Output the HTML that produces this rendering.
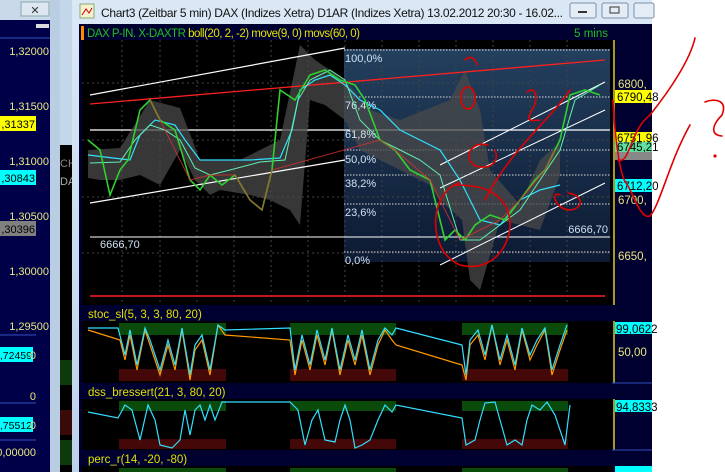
<!DOCTYPE html>
<html><head><meta charset="utf-8"><style>
html,body{margin:0;padding:0;width:725px;height:472px;overflow:hidden;background:#fff}
svg{display:block}
text{font-family:"Liberation Sans",sans-serif}
</style></head><body>
<svg width="725" height="472" viewBox="0 0 725 472" xmlns="http://www.w3.org/2000/svg">
<defs>
<linearGradient id="tb" x1="0" y1="0" x2="0" y2="1"><stop offset="0" stop-color="#dbe8f6"/><stop offset="1" stop-color="#bcd2ea"/></linearGradient>
<linearGradient id="fib" x1="0" y1="0" x2="0" y2="1"><stop offset="0" stop-color="#23405e"/><stop offset="1" stop-color="#0d1a33"/></linearGradient>
</defs>
<rect width="725" height="472" fill="#fff"/>
<rect x="0" y="0" width="60" height="472" fill="#b9cde3"/>
<rect x="0" y="0" width="50" height="472" fill="#000048"/>
<rect x="0" y="0" width="50" height="20" fill="#c9d9ea"/>
<rect x="21" y="2" width="28" height="14" fill="#dde7f2" stroke="#8aa" />
<text x="35" y="14" font-size="11" text-anchor="middle" fill="#333">✕</text>
<rect x="36" y="24" width="13" height="4" fill="#ddd"/>
<line x1="0" y1="38" x2="50" y2="38" stroke="#3050c0"/>
<g font-size="11" fill="#e8e880" text-anchor="end">
<text x="49" y="55">1,32000</text>
<text x="49" y="110">1,31500</text>
<text x="49" y="165">1,31000</text>
<text x="49" y="220">1,30500</text>
<text x="49" y="275">1,30000</text>
<text x="49" y="330">1,29500</text>
<text x="36" y="400">0</text>
<text x="36" y="456">50,00000</text>
</g>
<rect x="0" y="116" width="36" height="15" fill="#ffff00"/><text x="35" y="128" font-size="11" fill="#000" text-anchor="end">,31337</text>
<rect x="0" y="170" width="36" height="15" fill="#00ffff"/><text x="35" y="182" font-size="11" fill="#000" text-anchor="end">,30843</text>
<rect x="0" y="221" width="36" height="15" fill="#808080"/><text x="35" y="233" font-size="11" fill="#000" text-anchor="end">,30396</text>
<line x1="0" y1="335" x2="36" y2="335" stroke="#3050c0"/>
<rect x="0" y="347" width="33" height="15" fill="#00ffff"/><text x="32" y="359" font-size="10.5" fill="#000" text-anchor="end">9,72459</text>
<text x="36" y="359" font-size="11" fill="#e8e880" text-anchor="end">0</text>
<line x1="0" y1="403" x2="36" y2="403" stroke="#3050c0"/>
<rect x="0" y="417" width="33" height="15" fill="#00ffff"/><text x="32" y="429" font-size="10.5" fill="#000" text-anchor="end">1,75512</text>
<text x="36" y="429" font-size="11" fill="#e8e880" text-anchor="end">0</text>
<line x1="0" y1="440" x2="36" y2="440" stroke="#3050c0"/>
<rect x="60" y="0" width="12" height="472" fill="#c4d6ea"/>
<rect x="60" y="145" width="12" height="327" fill="#000"/>
<text x="60" y="167" font-size="11" fill="#888">CH</text>
<text x="60" y="185" font-size="11" fill="#aaa">DA</text>
<rect x="60" y="360" width="12" height="25" fill="#0c3a0c"/>
<rect x="60" y="410" width="12" height="25" fill="#3a0a0a"/>
<rect x="60" y="440" width="12" height="25" fill="#0c3a0c"/>
<rect x="72" y="0" width="580" height="472" fill="url(#tb)"/>
<rect x="80" y="4" width="14" height="14" fill="#f4f0d0" stroke="#8a7" />
<path d="M82 15 L86 9 L89 13 L92 8" stroke="#c00" fill="none"/>
<text x="101" y="17" font-size="12" fill="#111" textLength="462">Chart3 (Zeitbar 5 min)  DAX (Indizes Xetra) D1AR (Indizes Xetra) 13.02.2012 20:30 - 16.02...</text>
<rect x="570" y="3" width="26" height="15" rx="2" fill="#e4ecf5" stroke="#7a8fa8"/><rect x="578" y="11" width="9" height="2" fill="#333"/>
<rect x="602" y="3" width="26" height="15" rx="2" fill="#e4ecf5" stroke="#7a8fa8"/><rect x="610" y="7" width="9" height="6" fill="none" stroke="#333"/>
<rect x="634" y="3" width="20" height="15" rx="2" fill="#e4ecf5" stroke="#7a8fa8"/>
<rect x="79" y="24" width="573" height="448" fill="#000030"/>
<rect x="81" y="26" width="3" height="14" fill="#ff8c00"/>
<text x="87" y="37" font-size="11.5" textLength="273"><tspan fill="#20c020">DAX P-IN. X-DAXTR </tspan><tspan fill="#e0e000">boll(20, 2, -2) move(9, 0) movs(60, 0)</tspan></text>
<text x="608" y="37" font-size="11.5" fill="#20c020" text-anchor="end">5 mins</text>
<rect x="82" y="40" width="530" height="265" fill="#000"/>
<rect x="344" y="49" width="266" height="213" fill="url(#fib)"/>
<g stroke="#444" stroke-dasharray="2,3">
<line x1="122" y1="40" x2="122" y2="305"/><line x1="160" y1="40" x2="160" y2="305"/><line x1="197" y1="40" x2="197" y2="305"/><line x1="234" y1="40" x2="234" y2="305"/><line x1="271" y1="40" x2="271" y2="305"/><line x1="308" y1="40" x2="308" y2="305"/><line x1="345" y1="40" x2="345" y2="305"/><line x1="382" y1="40" x2="382" y2="305"/><line x1="419" y1="40" x2="419" y2="305"/><line x1="456" y1="40" x2="456" y2="305"/><line x1="493" y1="40" x2="493" y2="305"/><line x1="530" y1="40" x2="530" y2="305"/><line x1="567" y1="40" x2="567" y2="305"/>
<line x1="82" y1="83" x2="612" y2="83"/><line x1="82" y1="140" x2="612" y2="140"/><line x1="82" y1="197" x2="612" y2="197"/><line x1="82" y1="253" x2="612" y2="253"/>
</g>
<g stroke="#ddd" stroke-dasharray="1.5,1.5">
<line x1="344" y1="50" x2="610" y2="50"/><line x1="344" y1="97" x2="610" y2="97"/><line x1="344" y1="150" x2="610" y2="150"/><line x1="344" y1="175" x2="610" y2="175"/><line x1="344" y1="204" x2="610" y2="204"/><line x1="344" y1="252" x2="610" y2="252"/>
</g>
<line x1="90" y1="130" x2="610" y2="130" stroke="#fff" stroke-width="1.3"/>
<line x1="90" y1="237" x2="610" y2="237" stroke="#fff" stroke-width="1"/>
<path d="M88 150 L120 148 L150 100 L180 108 L200 160 L240 160 L280 140 L300 45 L315 60 L330 70 L345 80 L370 110 L400 120 L450 100 L465 70 L480 110 L490 170 L520 205 L540 160 L560 142 L560 175 L540 230 L520 225 L500 220 L480 290 L470 280 L462 220 L440 200 L430 185 L400 170 L360 150 L345 120 L325 105 L310 100 L300 225 L290 210 L270 200 L250 195 L220 190 L210 195 L195 180 L180 150 L160 185 L150 180 L140 175 L120 180 L100 180 L88 178 Z" fill="#4a4a4a" opacity="0.75"/>
<g font-size="11" fill="#cfe0f0">
<text x="345" y="62">100,0%</text><text x="345" y="109">76,4%</text><text x="345" y="138">61,8%</text><text x="345" y="163">50,0%</text><text x="345" y="187">38,2%</text><text x="345" y="216">23,6%</text><text x="345" y="264">0,0%</text>
<text x="100" y="248">6666,70</text><text x="608" y="233" text-anchor="end">6666,70</text>
</g>
<line x1="90" y1="95" x2="345" y2="48" stroke="#fff" stroke-width="1.2"/>
<line x1="90" y1="203" x2="345" y2="160" stroke="#fff" stroke-width="1.2"/>
<line x1="90" y1="104" x2="605" y2="60" stroke="#ff2020" stroke-width="1.3"/>
<line x1="440" y1="265" x2="605" y2="183" stroke="#fff"/>
<line x1="440" y1="165" x2="605" y2="82" stroke="#fff"/>
<line x1="440" y1="188" x2="605" y2="110" stroke="#fff"/>
<line x1="90" y1="296" x2="605" y2="296" stroke="#ff2020" stroke-width="1.5"/>
<polyline points="88,155 130,160 140,135 155,120 175,125 185,140 200,160 220,160 250,160 280,158 292,130 300,90 315,80 330,75 345,85 360,100 380,110 400,130 420,140 440,150 460,180 480,220 500,225 520,200 540,190 560,185" fill="none" stroke="#30e0ff" stroke-width="1.2"/>
<polyline points="90,163 120,162 135,140 150,125 165,130 180,140 195,168 210,175 230,170 260,162 285,160 298,100 310,80 330,70 345,80 360,120 380,140 400,150 420,160 440,175 460,240 480,240 500,225 520,210 540,180 560,150 575,100 600,85" fill="none" stroke="#60f0b0" stroke-width="1"/>
<polyline points="88,140 100,150 110,195 120,170 128,160 140,110 150,100 160,120 175,130 190,180 200,190 210,175 222,185 235,175 250,200 262,210 272,170 280,90 295,100 310,75 325,70 340,80 355,85 365,100 380,140 395,150 410,170 430,180 445,240 455,230 465,240 475,225 490,215 505,220 520,200 535,180 545,170 560,140 570,95 585,90 600,95" fill="none" stroke="#30d030" stroke-width="1.6"/>
<polyline points="150,100 160,120 190,180 210,175 235,175 250,200 262,210 272,170 380,140 395,150 430,180 460,240 500,220 520,200 545,170 555,150" fill="none" stroke="#e03030" stroke-width="1" opacity="0.8"/>
<rect x="613" y="40" width="39" height="265" fill="#000030"/>
<line x1="614" y1="40" x2="614" y2="305" stroke="#e0d000" stroke-width="1.5"/>
<g font-size="11.5" fill="#e8e880">
<text x="618" y="88">6800,</text><text x="618" y="204">6700,</text><text x="618" y="260">6650,</text>
</g>
<rect x="615" y="90" width="37" height="13" fill="#ffff00"/><text x="617" y="101" font-size="11.5" fill="#000">6790,48</text>
<rect x="615" y="132" width="37" height="10" fill="#ffff00"/><text x="617" y="142" font-size="11.5" fill="#000">6751,96</text>
<rect x="615" y="142" width="37" height="10" fill="#60e0a0"/><text x="617" y="151" font-size="11.5" fill="#000">6745,21</text>
<rect x="615" y="152" width="37" height="8" fill="#888"/>
<rect x="615" y="179" width="37" height="13" fill="#00ffff"/><text x="617" y="190" font-size="11.5" fill="#000">6712,20</text>
<rect x="82" y="307" width="570" height="14" fill="#000030"/>
<text x="88" y="318" font-size="11.5" fill="#e0e000">stoc_sl(5, 3, 3, 80, 20)</text>
<rect x="82" y="321" width="530" height="62" fill="#000"/>
<g fill="#0a4a0a"><rect x="119" y="323" width="107" height="12"/><rect x="290" y="323" width="106" height="12"/><rect x="462" y="323" width="106" height="12"/></g>
<g fill="#440808"><rect x="119" y="369" width="107" height="12"/><rect x="290" y="369" width="106" height="12"/><rect x="462" y="369" width="106" height="12"/></g>
<polyline points="88,330 120,340 125,360 130,335 137,370 145,330 150,345 160,375 168,345 175,370 182,330 190,380 195,350 202,340 210,375 218,325 225,335 290,340 295,375 302,340 310,370 317,335 325,365 332,330 340,375 348,340 355,365 362,335 370,375 378,345 385,330 392,340 396,345 462,365 466,380 470,345 478,335 485,360 492,325 500,365 507,340 515,370 522,330 530,360 537,345 545,330 552,375 560,350 567,330" fill="none" stroke="#ff9900" stroke-width="1.2"/>
<polyline points="88,328 118,328 125,355 130,330 137,365 145,328 150,340 160,370 168,340 175,365 182,328 190,375 195,345 202,335 210,370 218,325 225,330 290,328 295,370 302,335 310,365 317,330 325,360 332,328 340,370 348,335 355,360 362,330 370,370 378,340 385,328 392,335 396,328 462,345 466,375 470,340 478,330 485,355 492,325 500,360 507,335 515,365 522,328 530,355 537,340 545,328 552,370 560,345 567,325" fill="none" stroke="#30e0ff" stroke-width="1.2"/>
<rect x="613" y="321" width="39" height="62" fill="#000030"/>
<line x1="614" y1="321" x2="614" y2="383" stroke="#e0d000" stroke-width="1.5"/>
<rect x="615" y="322" width="37" height="12" fill="#00ffff"/><text x="616" y="333" font-size="11.5" fill="#000">99,0622</text>
<text x="618" y="356" font-size="11.5" fill="#e8e880">50,00</text>
<line x1="612" y1="383" x2="652" y2="383" stroke="#3050c0"/>
<rect x="82" y="385" width="570" height="14" fill="#000030"/>
<text x="88" y="396" font-size="11.5" fill="#e0e000">dss_bressert(21, 3, 80, 20)</text>
<rect x="82" y="399" width="530" height="51" fill="#000"/>
<g fill="#0a4a0a"><rect x="119" y="401" width="107" height="10"/><rect x="290" y="401" width="106" height="10"/><rect x="462" y="401" width="106" height="10"/></g>
<g fill="#440808"><rect x="119" y="439" width="107" height="10"/><rect x="290" y="439" width="106" height="10"/><rect x="462" y="439" width="106" height="10"/></g>
<polyline points="88,412 118,418 125,405 132,410 140,440 148,405 155,420 160,445 172,448 180,440 185,410 190,435 195,410 200,405 205,420 210,405 215,420 222,402 290,402 298,410 305,445 312,420 318,410 325,440 335,442 340,420 345,405 350,420 355,448 362,445 370,440 378,420 385,405 392,412 396,405 462,418 466,445 475,440 480,420 485,403 495,402 500,420 507,445 515,440 522,445 527,420 532,405 540,410 547,402 555,415 565,445 570,405" fill="none" stroke="#30e0ff" stroke-width="1.2"/>
<rect x="613" y="399" width="39" height="51" fill="#000030"/>
<line x1="614" y1="399" x2="614" y2="450" stroke="#e0d000" stroke-width="1.5"/>
<rect x="615" y="400" width="37" height="12" fill="#00ffff"/><text x="616" y="411" font-size="11.5" fill="#000">94,8333</text>
<line x1="612" y1="450" x2="652" y2="450" stroke="#3050c0"/>
<rect x="82" y="452" width="570" height="14" fill="#000030"/>
<text x="88" y="463" font-size="11.5" fill="#e0e000">perc_r(14, -20, -80)</text>
<rect x="82" y="466" width="530" height="6" fill="#000"/>
<g fill="#0a4a0a"><rect x="119" y="468" width="107" height="4"/><rect x="290" y="468" width="106" height="4"/><rect x="462" y="468" width="106" height="4"/></g>
<rect x="615" y="466" width="37" height="6" fill="#00ffff"/>
<g fill="none" stroke="#e00000" stroke-width="1.6" stroke-linecap="round">
<ellipse cx="468" cy="98" rx="7" ry="11"/>
<path d="M465 60 C470 55 475 58 477 65"/>
<path d="M488 145 C470 140 462 160 476 166 C490 170 500 162 495 150"/>
<path d="M527 92 C535 85 540 98 532 110 C528 118 525 122 540 120"/>
<path d="M460 183 C430 190 425 250 460 265 C500 275 520 230 505 205 C495 190 480 185 455 185"/>
<path d="M485 200 C510 150 550 120 570 90"/>
<path d="M560 195 C550 190 555 210 570 210 C585 208 583 195 568 193"/>
<path d="M613 100 C615 140 620 175 626 183 C632 190 640 220 650 216 C660 205 670 160 690 125"/>
<path d="M618 160 C630 165 630 130 650 115 C670 90 690 60 695 38"/>
<path d="M705 102 C715 98 728 100 722 115 C712 125 710 135 722 136"/>
<circle cx="715" cy="156" r="0.8"/>
</g>
</svg>
</body></html>
